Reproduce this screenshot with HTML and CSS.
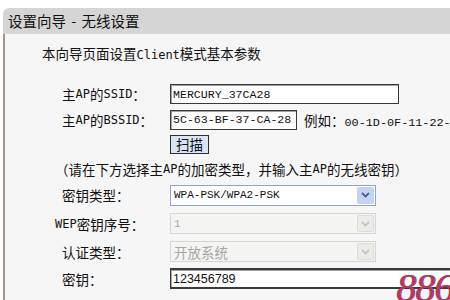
FILE: index.html
```html
<!DOCTYPE html>
<html lang="zh-CN">
<head>
  <meta charset="UTF-8">
  <title>设置向导 - 无线设置</title>
  <link rel="stylesheet" href="styles.css">
</head>
<body>

<div class="panel">
  <div class="title">设置向导 - 无线设置</div>

  <div class="content">
    <p class="intro">本向导页面设置<span class="en">Client</span>模式基本参数</p>

    <!-- form rows -->
    <div class="form">
      <label class="label">主<span class="en">AP</span>的<span class="en">SSID</span>：</label>
      <div class="field"><input class="text ssid" type="text" value="MERCURY_37CA28"></div>

      <label class="label">主<span class="en">AP</span>的<span class="en">BSSID</span>：</label>
      <div class="field">
        <input class="text bssid" type="text" value="5C-63-BF-37-CA-28">
        <span class="hint">例如：<span class="en">00-1D-0F-11-22-33</span></span>
      </div>

      <div></div>
      <div class="field"><button class="scan" type="button">扫描</button></div>

      <div class="note">（请在下方选择主<span class="en">AP</span>的加密类型，并输入主<span class="en">AP</span>的无线密钥）</div>

      <label class="label">密钥类型：</label>
      <div class="field">
        <div class="select">
          <span class="select-text en">WPA-PSK/WPA2-PSK</span>
          <span class="select-arrow"><svg width="9" height="6" viewBox="0 0 9 6"><path d="M1 1 L4.5 4.5 L8 1" fill="none" stroke="#4d6185" stroke-width="1.8"/></svg></span>
        </div>
      </div>

      <label class="label label-wide"><span class="en">WEP</span>密钥序号：</label>
      <div class="field">
        <div class="select disabled">
          <span class="select-text en">1</span>
          <span class="select-arrow"><svg width="9" height="6" viewBox="0 0 9 6"><path d="M1 1 L4.5 4.5 L8 1" fill="none" stroke="#c4c4c0" stroke-width="1.8"/></svg></span>
        </div>
      </div>

      <label class="label">认证类型：</label>
      <div class="field">
        <div class="select disabled">
          <span class="select-text">开放系统</span>
          <span class="select-arrow"><svg width="9" height="6" viewBox="0 0 9 6"><path d="M1 1 L4.5 4.5 L8 1" fill="none" stroke="#c4c4c0" stroke-width="1.8"/></svg></span>
        </div>
      </div>

      <label class="label">密钥：</label>
      <div class="field"><input class="text key" type="text" value="123456789"></div>
    </div>
  </div>
</div>

<div class="watermark">886</div>

</body>
</html>
```

FILE: styles.css
```css
body {
    margin: 0;
    background-color: #ffffff;
    font-family: "Noto Sans CJK SC", "Noto Sans", sans-serif;
    color: #111111;
    overflow: hidden;
}

/* latin runs in the bitmap-like half width font */
.en {
    font-family: "DejaVu Sans Mono", monospace;
    font-size: 12px;
}

.panel {
    margin: 8px 0 0 3px;
}

.title {
    height: 26px;
    line-height: 26px;
    padding-left: 5px;
    font-size: 14.5px;
    word-spacing: 2px;
    background-color: #d5d5d5;
    border-top-left-radius: 6px;
}

.content {
    height: 270px;
    border-left: 2px solid #a8928a;
    background-color: #f6f6f6;
}

.intro {
    margin: 0;
    padding: 9px 0 0 37px;
    font-size: 13.5px;
    line-height: 20px;
}

.form {
    display: grid;
    grid-template-columns: 108px 1fr;
    grid-template-rows: 26px 25px 24px 25px 28px 29px 27px 27px;
    margin-top: 16px;
    padding-left: 57px;
    font-size: 13.5px;
}

.label {
    display: flex;
    align-items: center;
    white-space: nowrap;
}

.label-wide {
    margin-left: -7px;
}

.field {
    display: flex;
    align-items: center;
    white-space: nowrap;
}

.text {
    height: 20px;
    box-sizing: border-box;
    padding: 0 2px;
    border: 1px solid #3a3a3a;
    box-shadow: inset 1px 1px 0 #a0a0a0;
    background-color: #ffffff;
    font-family: "Liberation Mono", monospace;
    font-size: 11.6px;
    color: #111;
}

.ssid {
    width: 229px;
}

.bssid {
    width: 127px;
}

.key {
    width: 300px;
    height: 21px;
    border-width: 2px 1px;
    font-family: "Liberation Sans", sans-serif;
    font-size: 12.5px;
}

.hint {
    margin-left: 7px;
}

.hint .en {
    font-family: "Liberation Mono", monospace;
    font-size: 11.8px;
}

.scan {
    height: 19px;
    padding: 0 5px;
    border: 1px solid #2e2e2e;
    background-color: #d7e5f5;
    font-family: "Noto Sans CJK SC", sans-serif;
    font-size: 13.5px;
    line-height: 15px;
    color: #111;
}

.note {
    grid-column: 1 / 3;
    display: flex;
    align-items: center;
    margin-left: -7px;
    white-space: nowrap;
}

.select {
    display: flex;
    align-items: center;
    justify-content: space-between;
    width: 206px;
    height: 21px;
    box-sizing: border-box;
    border: 1px solid #8ea6c8;
    background-color: #ffffff;
}

.select-text {
    padding-left: 3px;
}

.select .en {
    font-family: "Liberation Mono", monospace;
    font-size: 11px;
}

.select-arrow {
    display: flex;
    align-items: center;
    justify-content: center;
    width: 17px;
    height: 17px;
    margin-right: 1px;
    border-radius: 2px;
    background-color: #c3d3f8;
}

.select.disabled {
    border-color: #d6d6d2;
    background-color: #f4f4f2;
    color: #a8a8a4;
}

.select.disabled .select-arrow {
    background-color: #ebebe8;
    border: 1px solid #dcdcd8;
    box-sizing: border-box;
}

.watermark {
    position: absolute;
    left: 396px;
    top: 268px;
    font-family: "Liberation Serif", serif;
    font-style: italic;
    font-size: 40px;
    line-height: 40px;
    color: #c2334c;
    text-shadow: 1px 0 0 #5a4cc0;
    letter-spacing: -1px;
}
```
